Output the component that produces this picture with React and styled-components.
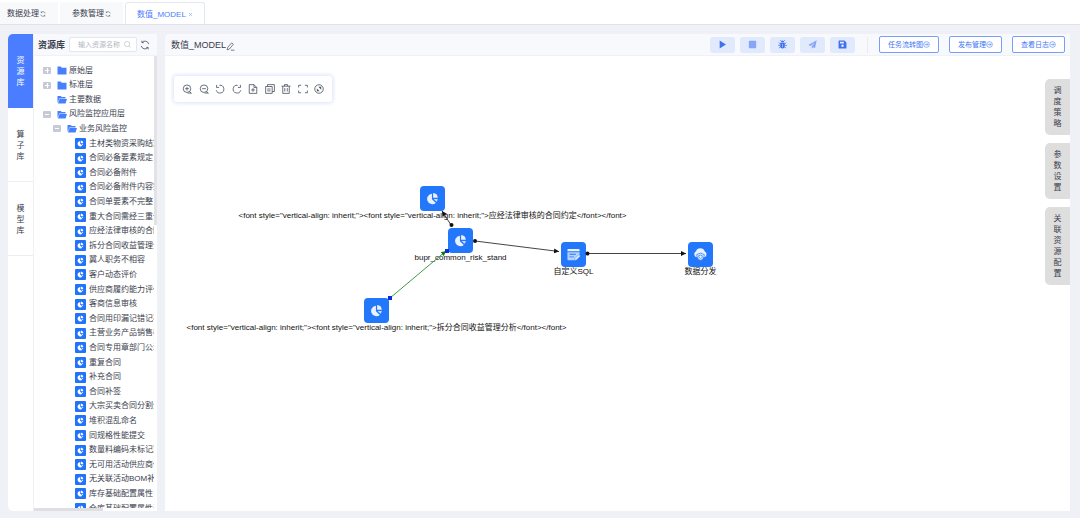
import React from "react";
import styled, { createGlobalStyle, css } from "styled-components";

const Global = createGlobalStyle`
  * { box-sizing: border-box; }
  html, body, #root { height: 100%; }
  body {
    margin: 0;
    overflow: hidden;
    background: #f0f1f6;
    color: #3a404d;
    font: 8px/14px "Liberation Sans", "Noto Sans CJK SC", sans-serif;
  }
  button, input { font: inherit; color: inherit; margin: 0; }
  button { cursor: pointer; padding: 0; border: 0; background: none; }
  ul { list-style: none; margin: 0; padding: 0; }
`;

const Page = styled.div`
  display: flex;
  flex-direction: column;
  height: 100%;
`;

const TabBar = styled.nav`
  display: flex;
  align-items: flex-end;
  flex: none;
  gap: 2px;
  height: 25px;
  background: #fff;
  border-bottom: 1px solid #dfe2e9;
`;

const PageTab = styled.button`
  display: flex;
  align-items: center;
  gap: 1px;
  height: 22px;
  padding: 2px 12px 0 ${(p) => (p.$first ? "7px" : "12px")};
  background: #f8f9fb;
  white-space: nowrap;
  ${(p) =>
    p.$active &&
    css`
      gap: 2px;
      padding: 2px 11px 0;
      background: #fff;
      color: #4d7cfe;
      border: 1px solid #e3e7f2;
      border-bottom: 0;
      border-radius: 3px 3px 0 0;
    `}
`;

const Workspace = styled.div`
  display: flex;
  flex: 1;
  min-height: 0;
  padding: 9px 10px 7px 8px;
`;

const Rail = styled.nav`
  display: flex;
  flex-direction: column;
  flex: none;
  width: 25px;
  background: #fff;
  border-radius: 5px 0 0 5px;
  overflow: hidden;
`;

const RailTab = styled.button`
  display: flex;
  align-items: center;
  justify-content: center;
  height: 74px;
  padding: 2px 8px 0;
  line-height: 11px;
  border-bottom: 1px solid #eceef3;
  ${(p) =>
    p.$active &&
    css`
      background: #4a7dff;
      color: #fff;
      border-color: #4a7dff;
    `}
`;

const Library = styled.aside`
  display: flex;
  flex-direction: column;
  flex: none;
  width: 124px;
  margin-right: 8px;
  background: #fff;
  border-left: 1px solid #f0f1f5;
`;

const LibraryHeader = styled.header`
  display: flex;
  align-items: center;
  flex: none;
  height: 22px;
  padding: 0 7px 0 4px;
  background: #f7f9fd;
  border-bottom: 1px solid #eff1f6;
`;

const LibraryTitle = styled.h2`
  flex: 1;
  margin: 0;
  font-size: 9px;
  font-weight: 700;
`;

const SearchBox = styled.label`
  display: flex;
  align-items: center;
  width: 68px;
  height: 15px;
  margin-right: 3px;
  padding: 0 5px 0 8px;
  background: #fff;
  border: 1px solid #e3e6ed;
  border-radius: 2px;
  color: #b0b5c0;
`;

const SearchInput = styled.input`
  flex: 1;
  min-width: 0;
  padding: 0;
  border: 0;
  outline: 0;
  background: none;
  font-size: 7px;
  &::placeholder { color: #b4b8c2; opacity: 1; }
`;

const IconButton = styled.button`
  display: flex;
  align-items: center;
  justify-content: center;
  color: #4b5261;
`;

const EditButton = styled(IconButton)`
  padding-top: 4px;
`;

const TreeArea = styled.div`
  display: flex;
  flex: 1;
  min-height: 0;
`;

const Tree = styled.ul`
  display: grid;
  flex: 1;
  min-width: 0;
  grid-auto-rows: 15px 14px 15px 14px 15px;
  align-content: start;
  padding-top: 7px;
  overflow: hidden;
`;

const indents = [9, 19, 41];

const TreeRow = styled.li`
  display: flex;
  align-items: center;
  padding-left: ${(p) => indents[p.$level]}px;
  white-space: nowrap;
  overflow: hidden;
`;

const Toggle = styled.button`
  position: relative;
  flex: none;
  width: 8px;
  height: 7px;
  margin-right: 6px;
  border-radius: 1px;
  background: #c6cad5;
  &::before {
    content: "";
    position: absolute;
    inset: 3px 2px;
    background: #fff;
  }
  &::after {
    content: "";
    position: absolute;
    inset: 1px 3px 1px 4px;
    background: ${(p) => (p.$open ? "none" : "#fff")};
  }
`;

const ToggleGap = styled.span`
  flex: none;
  width: 14px;
`;

const FolderIcon = styled.svg`
  flex: none;
  width: 10px;
  height: 9px;
  margin-right: 2px;
  color: #4780ff;
`;

const LeafIcon = styled.span`
  display: flex;
  align-items: center;
  justify-content: center;
  flex: none;
  width: 11px;
  height: 11px;
  margin-right: 3px;
  border-radius: 1px;
  background: #2173fa;
  color: #fff;
`;

const VerticalBar = styled.div`
  flex: none;
  width: 3px;
  height: 169px;
  background: #e3e3e5;
`;

const HorizontalBar = styled.div`
  flex: none;
  width: 56%;
  height: 3px;
  background: #dfdfe2;
`;

const Editor = styled.main`
  display: flex;
  flex-direction: column;
  flex: 1;
  min-width: 0;
  background: #fff;
  border-radius: 5px 0 0 0;
  overflow: hidden;
`;

const EditorHeader = styled.header`
  display: flex;
  align-items: center;
  flex: none;
  height: 22px;
  padding: 0 5px 0 6px;
  background: #f7f9fd;
  border-bottom: 1px solid #eff1f6;
`;

const ModelTitle = styled.h1`
  margin: 0;
  font-size: 9px;
  font-weight: 400;
`;

const Actions = styled.div`
  display: flex;
  gap: 5px;
  margin-left: auto;
  padding-right: 12px;
  border-right: 1px solid #e9ecf3;
`;

const ActionButton = styled.button`
  display: flex;
  align-items: center;
  justify-content: center;
  width: 25px;
  height: 16px;
  border-radius: 3px;
  background: #e1e9fd;
  color: ${(p) => (p.$muted ? "#87a5f5" : "#3f70ee")};
`;

const Links = styled.div`
  display: flex;
  gap: 10px;
  margin-left: 11px;
`;

const OutlineButton = styled.button`
  display: flex;
  align-items: center;
  justify-content: center;
  height: 17px;
  padding: 0 8px;
  border: 1px solid #7a9dfa;
  border-radius: 2px;
  background: #fff;
  color: #4375f5;
  font-size: 7px;
  white-space: nowrap;
`;

const Canvas = styled.section`
  position: relative;
  flex: 1;
  min-height: 0;
`;

const CanvasTools = styled.div`
  position: absolute;
  left: 9px;
  top: 20px;
  display: flex;
  align-items: center;
  justify-content: space-between;
  width: 158px;
  height: 26px;
  padding: 0 7px;
  border-radius: 3px;
  background: #fff;
  box-shadow: 0 0 4px 1px #dce1f7;
`;

const ToolButton = styled(IconButton)`
  width: 12px;
  height: 12px;
`;

const Edges = styled.svg`
  position: absolute;
  left: 0;
  top: 0;
  width: 100%;
  height: 100%;
  pointer-events: none;
`;

const Node = styled.div`
  position: absolute;
  left: ${(p) => p.$x}px;
  top: ${(p) => p.$y}px;
  display: flex;
  flex-direction: column;
  align-items: center;
  width: 25px;
  color: #111;
  line-height: 10px;
  white-space: nowrap;
`;

const NodeTile = styled.span`
  display: flex;
  align-items: center;
  justify-content: center;
  width: 25px;
  height: 25px;
  border-radius: 4px;
  background: #2277fb;
  color: #e8f1ff;
`;

const SideTabs = styled.div`
  position: absolute;
  right: 0;
  top: 23px;
  display: flex;
  flex-direction: column;
  gap: 8px;
`;

const SideTab = styled.button`
  width: 25px;
  padding: 6px 8px;
  border-radius: 5px 0 0 5px;
  background: #dedede;
  line-height: 11px;
`;

const Icon = ({ size = 10, weight = 1.3, children, fill }) => (
  <svg
    width={size}
    height={size}
    viewBox="0 0 16 16"
    fill={fill ? "currentColor" : "none"}
    stroke={fill ? "none" : "currentColor"}
    strokeWidth={weight}
    aria-hidden="true"
  >
    {children}
  </svg>
);

const Reload = ({ size }) => (
  <Icon size={size}>
    <path d="M2 9.500A6.200 6.200 0 0 0 12.800 12M14 6.500A6.200 6.200 0 0 0 3.200 4M3 1.200v3h3M13 14.800v-3h-3" />
  </Icon>
);

const ArrowCircle = () => (
  <Icon size={7}>
    <circle cx="8" cy="8" r="6.500" />
    <path d="M4 8h7.500M8.500 5l3 3-3 3" />
  </Icon>
);

const Pie = ({ size }) => (
  <Icon size={size} fill>
    <path d="M7.300 2v6.800l4.800 4.600A6.500 6.500 0 1 1 7.300 2z" />
    <path d="M8.800 1.300a6.300 6.300 0 0 1 5.700 5.700H8.800z" />
    <path d="M9.500 8.500h5a6.300 6.300 0 0 1-1.600 3.600z" opacity=".85" />
  </Icon>
);

const SqlForm = () => (
  <Icon size={15} fill>
    <path d="M2.500 2h11a1 1 0 0 1 1 1v1.500h-13V3a1 1 0 0 1 1-1z" />
    <path d="M1.500 5.500h13v3l-5 5.500h-7a1 1 0 0 1-1-1z" opacity=".75" />
    <path d="M3.500 7.200h7v1h-7zM3.500 10h5v1h-5z" fill="#2277fb" />
    <path d="M9 14.500l.5-2.300 4.200-4.200 1.700 1.700-4.200 4.200z" stroke="#2277fb" strokeWidth=".5" />
  </Icon>
);

const CloudShare = () => (
  <Icon size={15} fill>
    <path d="M4 11A3.300 3.300 0 0 1 3 4.900a5 5 0 0 1 9.600 0A3.300 3.300 0 0 1 12 11z" />
    <path d="M8 6.500l4 1.500c0 3-1.500 5.500-4 6.500-2.500-1-4-3.500-4-6.500z" stroke="#2277fb" strokeWidth=".8" />
    <path d="M8 8.500l2 .8c0 1.500-.8 2.500-2 3.200-1.200-.7-2-1.700-2-3.200z" fill="none" stroke="#2277fb" strokeWidth=".8" />
  </Icon>
);

const nodeIcons = {
  pie: <Pie size={13} />,
  sql: <SqlForm />,
  cloud: <CloudShare />,
};

const Folder = ({ open }) => (
  <FolderIcon viewBox="0 0 20 18" fill="currentColor" aria-hidden="true">
    {open ? (
      <>
        <path d="M1 15V2h6.500l2 2H17v3H4.500L2 15z" />
        <path d="M5 8h15l-3 9H2z" />
      </>
    ) : (
      <path d="M1 1h6.500l2 2.500H19V17H1z" />
    )}
  </FolderIcon>
);

const folders = [
  { name: "原始层", level: 0, toggle: "closed" },
  { name: "标准层", level: 0, toggle: "closed" },
  { name: "主要数据", level: 0, open: true },
  { name: "风险监控应用层", level: 0, toggle: "open", open: true },
  { name: "业务风险监控", level: 1, toggle: "open", open: true },
];

const models = [
  "主材类物资采购结算",
  "合同必备要素规定",
  "合同必备附件",
  "合同必备附件内容完整",
  "合同单要素不完整",
  "重大合同需经三重一大",
  "应经法律审核的合同约定",
  "拆分合同收益管理分析",
  "冀人职务不相容",
  "客户动态评价",
  "供应商履约能力评价",
  "客商信息审核",
  "合同用印漏记错记率",
  "主营业务产品销售模式",
  "合同专用章部门公章",
  "重复合同",
  "补充合同",
  "合同补签",
  "大宗买卖合同分割分析",
  "堆积混乱命名",
  "同规格性能提交",
  "数量料编码未标记准确",
  "无可用活动供应商价格",
  "无关联活动BOM补充",
  "库存基础配置属性",
  "仓库基础配置属性表",
];

const actions = [
  { label: "运行", icon: <path d="M3 1l11 7-11 7z" /> },
  { label: "停止", muted: true, icon: <rect x="1.500" y="1.500" width="13" height="13" rx="1" /> },
  {
    label: "调试",
    icon: (
      <>
        <path d="M5 4a3 3 0 0 1 6 0z" />
        <path d="M4 5h8v6a4 4 0 0 1-8 0z" />
        <path
          d="M4 7L1.500 4.500M12 7l2.500-2.500M4 9.500H.5M12 9.500h3.500M4.500 12L2 14.500M11.500 12l2.500 2.500M5.500 2L4 .5M10.500 2L12 .5"
          stroke="currentColor"
          strokeWidth="1.500"
        />
        <path d="M7.500 7h1v6h-1z" fill="#e1e9fd" />
      </>
    ),
  },
  {
    label: "发布",
    muted: true,
    icon: <path d="M15.500.5L.5 9l4 1.700L12 4.500 6.500 11.500v4l2.300-2.800 3.700 1.600z" />,
  },
  {
    label: "保存",
    icon: (
      <path
        fillRule="evenodd"
        d="M2 1h9.500L15 4.500V14a1 1 0 0 1-1 1H2a1 1 0 0 1-1-1V2a1 1 0 0 1 1-1zM3.500 3v3h7V3zM8 8a2.300 2.300 0 1 0 0 4.600A2.300 2.300 0 0 0 8 8z"
      />
    ),
  },
];

const tools = [
  { label: "放大", icon: <path d="M14 7.500a6 6 0 1 1-12 0 6 6 0 0 1 12 0zM12 12l3 3M9 14.500h6M5 7.500h6M8 4.500v6" /> },
  { label: "缩小", icon: <path d="M14 7.500a6 6 0 1 1-12 0 6 6 0 0 1 12 0zM12 12l3 3M9 14.500h6M5 7.500h6" /> },
  { label: "撤销", icon: <path d="M2.500 1.500v4h4M7 2.100A6.200 6.200 0 1 1 2 10" /> },
  { label: "重做", icon: <path d="M13.500 1.500v4h-4M9 2.100A6.200 6.200 0 1 0 14 10" /> },
  { label: "新建", icon: <path d="M9.500 1H2v14h12V5.500zM9.500 1v4.500H14M5 9.500h6M8 6.500v6" /> },
  { label: "复制", icon: <path d="M1 4h10.500v11H1zM4 4V1h11v11h-3.500M3.500 8H9M3.500 11H9" /> },
  { label: "删除", icon: <path d="M.8 3.500h14.400M5.500 3.500V1h5v2.500M2.800 3.500V15h10.400V3.500M6 6.500v5.500M10 6.500v5.500" /> },
  { label: "全屏", icon: <path d="M1 5.500V2h4M11 2h4v3.500M15 10.500V14h-4M5 14H1v-3.500" /> },
  {
    label: "定位",
    icon: (
      <>
        <circle cx="8" cy="8" r="6.800" />
        <path d="M7 4.500h4.500V9zM9 11.500H4.500V7z" fill="currentColor" stroke="none" />
      </>
    ),
  },
];

const nodes = [
  {
    x: 255,
    y: 130,
    icon: "pie",
    text: '<font style="vertical-align: inherit;"><font style="vertical-align: inherit;">应经法律审核的合同约定</font></font>',
  },
  { x: 283, y: 172, icon: "pie", text: "bupr_common_risk_stand" },
  {
    x: 199,
    y: 242,
    icon: "pie",
    text: '<font style="vertical-align: inherit;"><font style="vertical-align: inherit;">拆分合同收益管理分析</font></font>',
  },
  { x: 396, y: 186, icon: "sql", text: "自定义SQL" },
  { x: 523, y: 186, icon: "cloud", text: "数据分发" },
];

const Flow = () => (
  <>
    {nodes.map((n) => (
      <Node key={n.text} $x={n.x} $y={n.y}>
        <NodeTile>{nodeIcons[n.icon]}</NodeTile>
        <span>{n.text}</span>
      </Node>
    ))}
    <Edges aria-hidden="true">
      <defs>
        <marker id="tip" markerWidth="6" markerHeight="6" refX="5" refY="3" orient="auto" markerUnits="userSpaceOnUse">
          <path d="M0 .5L5 3 0 5.500z" fill="#111" />
        </marker>
        <marker id="tip-green" markerWidth="6" markerHeight="6" refX="5" refY="3" orient="auto" markerUnits="userSpaceOnUse">
          <path d="M0 .5L5 3 0 5.500z" fill="#0a7a10" />
        </marker>
      </defs>
      <g stroke="#444" strokeWidth="1">
        <path d="M286 169L277 155" markerEnd="url(#tip)" />
        <path d="M310 185L394 195.500" markerEnd="url(#tip)" />
        <path d="M422 197.500H521" markerEnd="url(#tip)" />
        <path d="M225 242L281 195" stroke="#3f9a45" markerEnd="url(#tip-green)" />
      </g>
      <g fill="#111">
        <circle cx="286.500" cy="169" r="2" />
        <circle cx="310" cy="185" r="2" />
        <circle cx="422.500" cy="197.500" r="2" />
      </g>
      <g fill="#0a2be0">
        <rect x="223" y="240" width="4" height="4" />
        <rect x="280" y="193" width="4" height="4" />
      </g>
    </Edges>
  </>
);

export default function App() {
  return (
    <>
      <Global />
      <Page>
        <TabBar>
          <PageTab $first>数据处理<Reload size={6} /></PageTab>
          <PageTab>参数管理<Reload size={6} /></PageTab>
          <PageTab $active>
            数值_MODEL
            <Icon size={5}><path d="M3 3l10 10M13 3L3 13" /></Icon>
          </PageTab>
        </TabBar>
        <Workspace>
          <Rail>
            <RailTab $active>资源库</RailTab>
            <RailTab>算子库</RailTab>
            <RailTab>模型库</RailTab>
          </Rail>
          <Library>
            <LibraryHeader>
              <LibraryTitle>资源库</LibraryTitle>
              <SearchBox>
                <SearchInput type="text" placeholder="输入资源名称" aria-label="输入资源名称" />
                <Icon size={7}><path d="M13 7A6 6 0 1 1 1 7a6 6 0 0 1 12 0zM11.500 11.500L15 15" /></Icon>
              </SearchBox>
              <IconButton aria-label="刷新"><Reload size={10} /></IconButton>
            </LibraryHeader>
            <TreeArea>
              <Tree>
                {folders.map((f) => (
                  <TreeRow key={f.name} $level={f.level}>
                    {f.toggle ? <Toggle $open={f.toggle === "open"} aria-label={f.name} /> : <ToggleGap />}
                    <Folder open={f.open} />
                    {f.name}
                  </TreeRow>
                ))}
                {models.map((m) => (
                  <TreeRow key={m} $level={2}>
                    <LeafIcon><Pie size={7} /></LeafIcon>
                    {m}
                  </TreeRow>
                ))}
              </Tree>
              <VerticalBar />
            </TreeArea>
            <HorizontalBar />
          </Library>
          <Editor>
            <EditorHeader>
              <ModelTitle>数值_MODEL</ModelTitle>
              <EditButton aria-label="编辑名称">
                <Icon size={9}><path d="M2 14l1-4.500L10 1.500l3 2.500-7 8.500zM8.500 14.500H15" /></Icon>
              </EditButton>
              <Actions>
                {actions.map((a) => (
                  <ActionButton key={a.label} $muted={a.muted} aria-label={a.label}>
                    <Icon size={9} fill>{a.icon}</Icon>
                  </ActionButton>
                ))}
              </Actions>
              <Links>
                {["任务流转图", "发布管理", "查看日志"].map((t) => (
                  <OutlineButton key={t}>{t}<ArrowCircle /></OutlineButton>
                ))}
              </Links>
            </EditorHeader>
            <Canvas>
              <Flow />
              <CanvasTools>
                {tools.map((t) => (
                  <ToolButton key={t.label} aria-label={t.label}>
                    <Icon size={10}>{t.icon}</Icon>
                  </ToolButton>
                ))}
              </CanvasTools>
              <SideTabs>
                {["调度策略", "参数设置", "关联资源配置"].map((t) => (
                  <SideTab key={t}>{t}</SideTab>
                ))}
              </SideTabs>
            </Canvas>
          </Editor>
        </Workspace>
      </Page>
    </>
  );
}
